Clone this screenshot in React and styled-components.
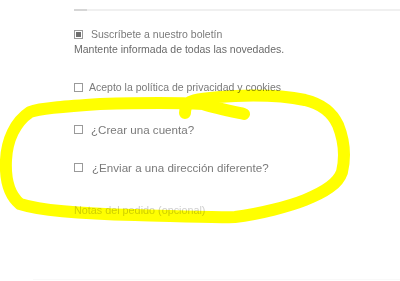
import React from "react";
import styled, { createGlobalStyle } from "styled-components";

const Global = createGlobalStyle`
  html, body { margin: 0; padding: 0; background: #fff; }
  body { font-family: "Liberation Sans", Arial, sans-serif; }
`;

const Page = styled.div`
  position: relative;
  width: 400px;
  height: 281px;
  overflow: hidden;
  background: #fff;
`;

const TopBar = styled.div`
  margin: 9px 0 0 74px;
  height: 2px;
  background: #f0f0f0;
  display: flex;
`;

const TopBarFill = styled.div`
  width: 13px;
  background: #d6d6d6;
`;

const Form = styled.div`
  padding-left: 74px;
  display: flex;
  flex-direction: column;
`;

const Row = styled.label`
  display: flex;
  align-items: center;
  gap: ${(p) => p.$gap || 7}px;
  height: ${(p) => p.$h || 16}px;
  margin-top: ${(p) => p.$mt || 0}px;
  font-size: ${(p) => p.$size || 10.5}px;
  color: #7a7a7a;
`;

const Box = styled.span`
  box-sizing: border-box;
  width: 9px;
  height: 9px;
  border: 1px solid #9a9a9a;
  background: #fff;
  display: flex;
  align-items: center;
  justify-content: center;
  flex: none;
`;

const Tick = styled.span`
  width: 5px;
  height: 5px;
  background: #6e6e6e;
`;

const Note = styled.div`
  font-size: 10.5px;
  line-height: 15px;
  color: #6a6a6a;
  margin-top: ${(p) => p.$mt || 0}px;
`;

const Muted = styled.div`
  font-size: 10.8px;
  line-height: 16px;
  color: #cfcfcf;
  margin-top: ${(p) => p.$mt || 0}px;
`;

const BottomLine = styled.div`
  position: absolute;
  left: 33px;
  right: 0;
  bottom: 1px;
  height: 1px;
  background: #f9f9f9;
`;

const Scribble = styled.svg`
  position: absolute;
  left: 0;
  top: 0;
  width: 400px;
  height: 281px;
  pointer-events: none;
  mix-blend-mode: multiply;
`;

export default function App() {
  return (
    <Page>
      <Global />
      <TopBar>
        <TopBarFill />
      </TopBar>
      <Form>
        <Row $mt={15} $gap={8}>
          <Box>
            <Tick />
          </Box>
          Suscríbete a nuestro boletín
        </Row>
        <Note $mt={0}>Mantente informada de todas las novedades.</Note>
        <Row $mt={22} $gap={6}>
          <Box />
          Acepto la política de privacidad y cookies
        </Row>
        <Row $mt={25} $h={18} $size={11.6} $gap={8}>
          <Box />
          ¿Crear una cuenta?
        </Row>
        <Row $mt={20} $h={18} $size={11.6} $gap={9}>
          <Box />
          ¿Enviar a una dirección diferente?
        </Row>
        <Muted $mt={26}>Notas del pedido (opcional)</Muted>
      </Form>
      <BottomLine />
      <Scribble viewBox="0 0 400 281">
        <path
          d="M244 114 C230 111 215 108 203 104 C170 102 130 103 100 104 C70 106 40 108 30 112 C15 122 7 140 6 160 C5 180 9 195 20 204 C45 212 90 214 135 215 C175 216 210 218 235 217 C260 214 290 206 305 200 C325 192 338 184 342 172 C346 155 344 140 338 125 C332 112 322 104 305 100 C285 96 260 95 235 96 C215 97 195 99 190 102 C186 105 185 108 185 113"
          fill="none"
          stroke="#ffff00"
          strokeWidth="12"
          strokeLinecap="round"
          strokeLinejoin="round"
        />
      </Scribble>
    </Page>
  );
}
